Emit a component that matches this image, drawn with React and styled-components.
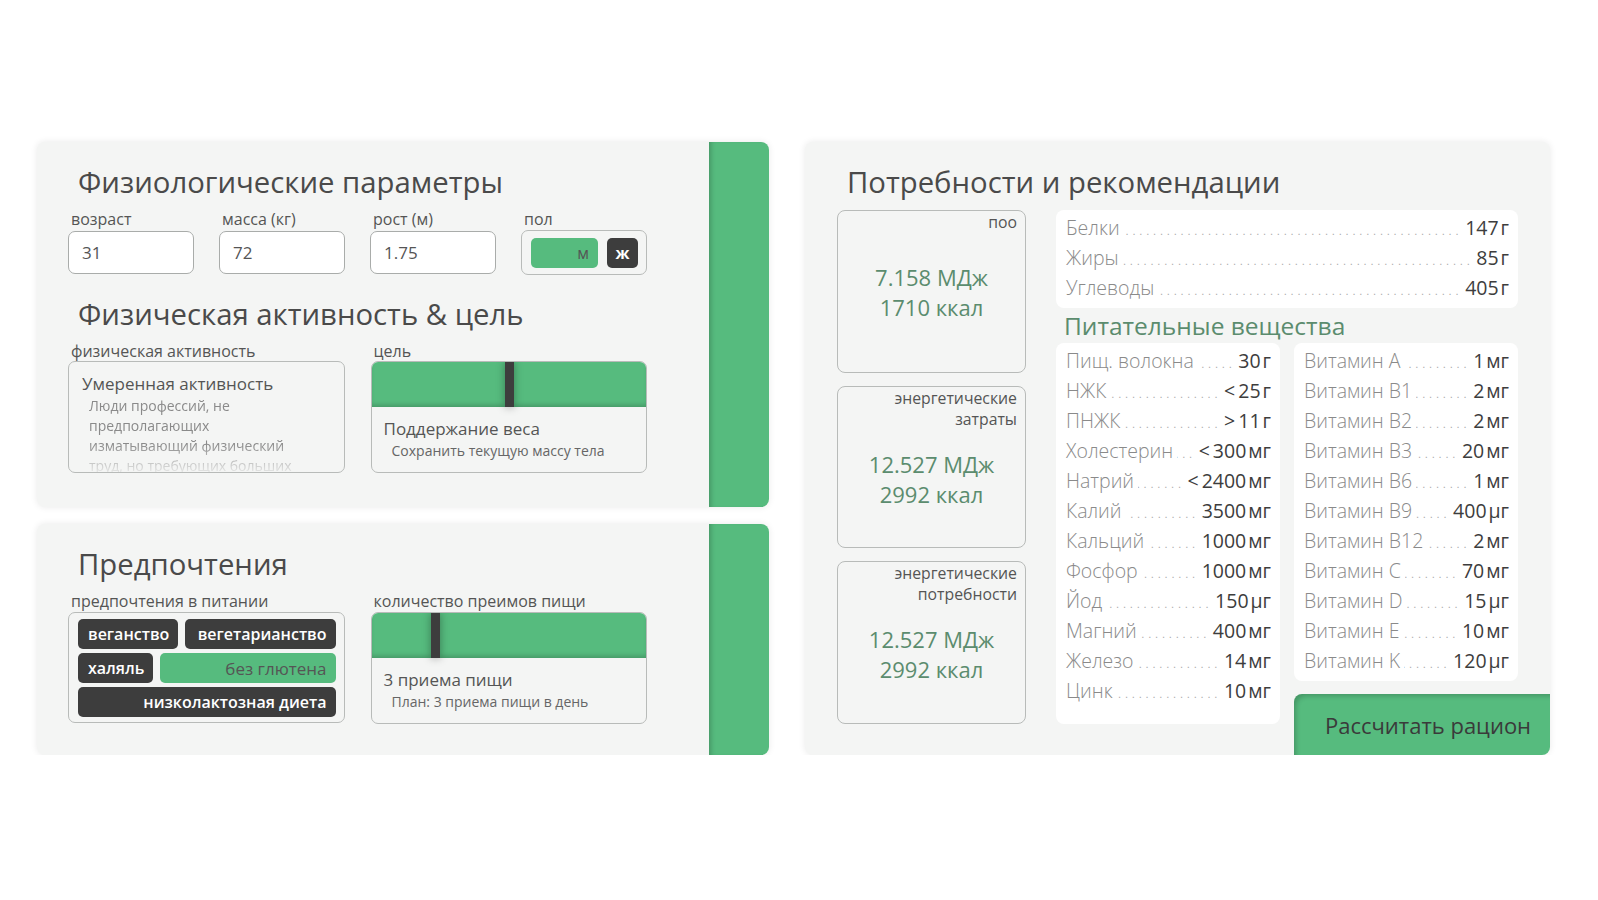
import React from 'react'
import styled, { createGlobalStyle } from 'styled-components'

const GREEN = '#56bb7e'
const DARK = '#3d3d3d'
const PANEL = '#f4f5f4'
const LINE = '#b8bbb9'
const VALUE_GREEN = '#5b8c6e'

const GlobalStyle = createGlobalStyle`
  html, body {
    margin: 0;
    background: #fff;
  }
  body {
    font-family: "Open Sans", "Noto Sans", sans-serif;
    color: #4a4a4a;
  }
  * {
    box-sizing: border-box;
  }
`

const Page = styled.div`
  display: flex;
  align-items: flex-start;
  gap: 36px;
  padding: 142px 0 0 37px;
`

const LeftColumn = styled.div`
  display: flex;
  flex-direction: column;
  gap: 17px;
  width: 732px;
`

const Panel = styled.section`
  display: flex;
  height: ${props => props.$height}px;
  background: ${PANEL};
  border-radius: 8px;
  box-shadow: 0 0 7px rgba(0, 0, 0, 0.09);
  overflow: hidden;
`

const PanelBody = styled.div`
  flex: 1;
  padding: 20px 62px 0 31px;
`

const SideBar = styled.div`
  width: 60px;
  background: ${GREEN};
  box-shadow: inset 5px 0 5px -3px rgba(0, 0, 0, 0.2);
`

const Title = styled.h2`
  margin: ${props => props.$top || 0}px 0 0 10px;
  font-size: 29.3px;
  font-weight: 400;
  line-height: 40px;
  color: #4a4a4a;
`

const FieldRow = styled.div`
  display: grid;
  grid-template-columns: repeat(4, 126px);
  column-gap: 25px;
  margin-top: 7px;
`

const FieldLabel = styled.div`
  padding-left: 3px;
  margin-bottom: ${props => props.$gap ?? 2}px;
  font-size: 16px;
  line-height: 20px;
  color: #555;
`

const TextInput = styled.input`
  display: block;
  width: 100%;
  height: 43px;
  padding: 0 13px;
  border: 1px solid #a9acaa;
  border-radius: 7px;
  background: #fff;
  font-family: "Open Sans", sans-serif;
  font-size: 17px;
  color: #555;
  outline: none;
`

const GenderToggle = styled.div`
  display: flex;
  align-items: center;
  gap: 9px;
  height: 45px;
  padding: 0 8px 0 9px;
  border: 1px solid ${LINE};
  border-radius: 7px;
`

const GenderOption = styled.div`
  display: flex;
  align-items: center;
  justify-content: ${props => (props.$active ? 'flex-end' : 'center')};
  width: ${props => (props.$active ? 67 : 31)}px;
  height: 30px;
  padding: 0 9px;
  border-radius: 5px;
  background: ${props => (props.$active ? GREEN : DARK)};
  color: ${props => (props.$active ? '#555' : '#fff')};
  font-size: 16px;
  font-weight: ${props => (props.$active ? 400 : 700)};
`

const PairRow = styled.div`
  display: grid;
  grid-template-columns: 1fr 1fr;
  column-gap: 26px;
  margin-top: 7px;
`

const BoxFrame = styled.div`
  height: 112px;
  border: 1px solid ${LINE};
  border-radius: 7px;
  overflow: hidden;
`

const ActivityBox = styled(BoxFrame)`
  padding: 10px 12px 0 13px;
`

const ActivityName = styled.div`
  font-size: 17px;
  line-height: 24px;
  color: #555;
`

const ActivityText = styled.div`
  max-width: 222px;
  height: 76px;
  padding-left: 7px;
  overflow: hidden;
  font-size: 14px;
  line-height: 20px;
  color: #8a8a8a;
  mask-image: linear-gradient(to bottom, #000 48px, rgba(0, 0, 0, 0.15) 76px);
`

const Track = styled.div`
  position: relative;
  height: 45px;
  background: ${GREEN};
  box-shadow: inset 0 -4px 5px -2px rgba(0, 0, 0, 0.2);
`

const Thumb = styled.div`
  position: absolute;
  top: 0;
  bottom: 0;
  left: ${props => props.$pos}%;
  width: 9px;
  background: ${DARK};
  box-shadow: 0 0 8px rgba(0, 0, 0, 0.35);
`

const SliderValue = styled.div`
  padding: 10px 12px 0;
  font-size: 17px;
  line-height: 24px;
  color: #555;
`

const SliderNote = styled.div`
  padding-left: 20px;
  font-size: 14px;
  line-height: 20px;
  color: #666;
`

const ChipBox = styled(BoxFrame)`
  display: flex;
  flex-direction: column;
  gap: 4px;
  height: 111px;
  padding: 6px 8px 0 9px;
`

const ChipRow = styled.div`
  display: flex;
  gap: 7px;
`

const Chip = styled.div`
  display: flex;
  align-items: center;
  justify-content: flex-end;
  flex-grow: ${props => (props.$grow ? 1 : 0)};
  height: 30px;
  padding: 0 9px 0 10px;
  border-radius: 5px;
  background: ${props => (props.$active ? GREEN : DARK)};
  color: ${props => (props.$active ? '#555' : '#fff')};
  font-size: ${props => (props.$active ? 17 : 16)}px;
  font-weight: ${props => (props.$active ? 400 : 600)};
  white-space: nowrap;
`

const RightPanel = styled(Panel)`
  flex-direction: column;
  width: 745px;
  padding: 20px 32px 31px;
`

const ContentGrid = styled.div`
  flex: 1;
  display: grid;
  grid-template-columns: 189px minmax(0, 1fr);
  column-gap: 30px;
  margin-top: 8px;
`

const EnergyColumn = styled.div`
  display: flex;
  flex-direction: column;
  gap: 13px;
`

const EnergyCard = styled.div`
  flex: 1;
  display: flex;
  flex-direction: column;
  padding: 1px 8px 0;
  border: 1px solid ${LINE};
  border-radius: 8px;
`

const EnergyLabel = styled.div`
  text-align: right;
  font-size: 15.8px;
  line-height: 21px;
  color: #555;
`

const EnergyValues = styled.div`
  flex: 1;
  display: flex;
  flex-direction: column;
  justify-content: center;
  align-items: center;
  padding-bottom: 20px;
  font-size: 22px;
  line-height: 30px;
  color: ${VALUE_GREEN};
`

const NutrientColumn = styled.div`
  display: flex;
  flex-direction: column;
  min-width: 0;
`

const ListCard = styled.div`
  padding: 3px 9px 5px 10px;
  background: #fff;
  border-radius: 8px;
`

const Row = styled.div`
  display: flex;
  align-items: baseline;
  height: 30px;
  font-size: 19.5px;
  line-height: 30px;
`

const Name = styled.span`
  flex-shrink: 0;
  font-weight: 300;
  color: #8a8a8a;
  white-space: nowrap;
`

const Leader = styled.span`
  flex: 1 1 0;
  width: 0;
  margin: 0 3px 0 4px;
  overflow: hidden;
  white-space: nowrap;
  direction: rtl;
  font-size: 15px;
  font-weight: 300;
  line-height: 18px;
  letter-spacing: 3.3px;
  color: #a8a8a8;
`

const Amount = styled.span`
  flex-shrink: 0;
  color: #3d3d3d;
  white-space: nowrap;
`

const Prefix = styled.span`
  margin-right: 3px;
`

const Unit = styled.span`
  margin-left: 2px;
`

const SectionHeading = styled.div`
  margin: 3px 0 2px 8px;
  font-size: 24.5px;
  line-height: 30px;
  color: ${VALUE_GREEN};
`

const NutrientGrid = styled.div`
  flex: 1;
  display: grid;
  grid-template-columns: minmax(0, 1fr) minmax(0, 1fr);
  column-gap: 14px;
`

const VitaminColumn = styled.div`
  display: flex;
  flex-direction: column;
`

const CalcButton = styled.button`
  height: 61px;
  margin: auto -32px -31px 0;
  padding: 0 0 0 12px;
  border: none;
  border-top-left-radius: 8px;
  background: ${GREEN};
  box-shadow: inset 4px 4px 5px -2px rgba(0, 0, 0, 0.2);
  font-family: "Open Sans", sans-serif;
  font-size: 22px;
  color: #3a3a3a;
  cursor: pointer;
`

const DOTS = '.'.repeat(70)

const macros = [
  ['Белки', '', '147', 'г'],
  ['Жиры', '', '85', 'г'],
  ['Углеводы', '', '405', 'г'],
]

const minerals = [
  ['Пищ. волокна', '', '30', 'г'],
  ['НЖК', '<', '25', 'г'],
  ['ПНЖК', '>', '11', 'г'],
  ['Холестерин', '<', '300', 'мг'],
  ['Натрий', '<', '2400', 'мг'],
  ['Калий', '', '3500', 'мг'],
  ['Кальций', '', '1000', 'мг'],
  ['Фосфор', '', '1000', 'мг'],
  ['Йод', '', '150', 'µг'],
  ['Магний', '', '400', 'мг'],
  ['Железо', '', '14', 'мг'],
  ['Цинк', '', '10', 'мг'],
]

const vitamins = [
  ['Витамин A', '', '1', 'мг'],
  ['Витамин B1', '', '2', 'мг'],
  ['Витамин B2', '', '2', 'мг'],
  ['Витамин B3', '', '20', 'мг'],
  ['Витамин B6', '', '1', 'мг'],
  ['Витамин B9', '', '400', 'µг'],
  ['Витамин B12', '', '2', 'мг'],
  ['Витамин C', '', '70', 'мг'],
  ['Витамин D', '', '15', 'µг'],
  ['Витамин E', '', '10', 'мг'],
  ['Витамин K', '', '120', 'µг'],
]

const energy = [
  { label: 'поо', mj: '7.158', kcal: '1710' },
  { label: 'энергетические затраты', mj: '12.527', kcal: '2992' },
  { label: 'энергетические потребности', mj: '12.527', kcal: '2992' },
]

const dietRows = [
  [{ name: 'веганство' }, { name: 'вегетарианство', grow: true }],
  [{ name: 'халяль' }, { name: 'без глютена', grow: true, active: true }],
  [{ name: 'низколактозная диета', grow: true }],
]

const NutrientList = ({ items }) => (
  <ListCard>
    {items.map(([name, prefix, amount, unit]) => (
      <Row key={name}>
        <Name>{name}</Name>
        <Leader>{DOTS}</Leader>
        <Amount>
          {prefix && <Prefix>{prefix}</Prefix>}
          {amount}
          <Unit>{unit}</Unit>
        </Amount>
      </Row>
    ))}
  </ListCard>
)

const Field = ({ label, value }) => (
  <div>
    <FieldLabel>{label}</FieldLabel>
    <TextInput value={value} readOnly />
  </div>
)

const Slider = ({ pos, value, note }) => (
  <BoxFrame>
    <Track>
      <Thumb $pos={pos} />
    </Track>
    <SliderValue>{value}</SliderValue>
    <SliderNote>{note}</SliderNote>
  </BoxFrame>
)

const App = () => (
  <>
    <GlobalStyle />
    <Page>
      <LeftColumn>
        <Panel $height={365}>
          <PanelBody>
            <Title>Физиологические параметры</Title>
            <FieldRow>
              <Field label="возраст" value="31" />
              <Field label="масса (кг)" value="72" />
              <Field label="рост (м)" value="1.75" />
              <div>
                <FieldLabel $gap={1}>пол</FieldLabel>
                <GenderToggle>
                  <GenderOption $active>м</GenderOption>
                  <GenderOption>ж</GenderOption>
                </GenderToggle>
              </div>
            </FieldRow>

            <Title $top={19}>Физическая активность &amp; цель</Title>
            <PairRow>
              <div>
                <FieldLabel $gap={0}>физическая активность</FieldLabel>
                <ActivityBox>
                  <ActivityName>Умеренная активность</ActivityName>
                  <ActivityText>
                    Люди профессий, не предполагающих изматывающий физический
                    труд, но требующих больших затрат энергии
                  </ActivityText>
                </ActivityBox>
              </div>
              <div>
                <FieldLabel $gap={0}>цель</FieldLabel>
                <Slider
                  pos={48.5}
                  value="Поддержание веса"
                  note="Сохранить текущую массу тела"
                />
              </div>
            </PairRow>
          </PanelBody>
          <SideBar />
        </Panel>

        <Panel $height={231}>
          <PanelBody>
            <Title>Предпочтения</Title>
            <PairRow>
              <div>
                <FieldLabel $gap={1}>предпочтения в питании</FieldLabel>
                <ChipBox>
                  {dietRows.map((row, i) => (
                    <ChipRow key={i}>
                      {row.map(d => (
                        <Chip key={d.name} $grow={d.grow} $active={d.active}>
                          {d.name}
                        </Chip>
                      ))}
                    </ChipRow>
                  ))}
                </ChipBox>
              </div>
              <div>
                <FieldLabel $gap={1}>количество преимов пищи</FieldLabel>
                <Slider
                  pos={21.5}
                  value="3 приема пищи"
                  note="План: 3 приема пищи в день"
                />
              </div>
            </PairRow>
          </PanelBody>
          <SideBar />
        </Panel>
      </LeftColumn>

      <RightPanel $height={613}>
        <Title>Потребности и рекомендации</Title>
        <ContentGrid>
          <EnergyColumn>
            {energy.map(e => (
              <EnergyCard key={e.label}>
                <EnergyLabel>{e.label}</EnergyLabel>
                <EnergyValues>
                  <div>{e.mj} МДж</div>
                  <div>{e.kcal} ккал</div>
                </EnergyValues>
              </EnergyCard>
            ))}
          </EnergyColumn>

          <NutrientColumn>
            <NutrientList items={macros} />
            <SectionHeading>Питательные вещества</SectionHeading>
            <NutrientGrid>
              <NutrientList items={minerals} />
              <VitaminColumn>
                <NutrientList items={vitamins} />
                <CalcButton>Рассчитать рацион</CalcButton>
              </VitaminColumn>
            </NutrientGrid>
          </NutrientColumn>
        </ContentGrid>
      </RightPanel>
    </Page>
  </>
)

export default App
